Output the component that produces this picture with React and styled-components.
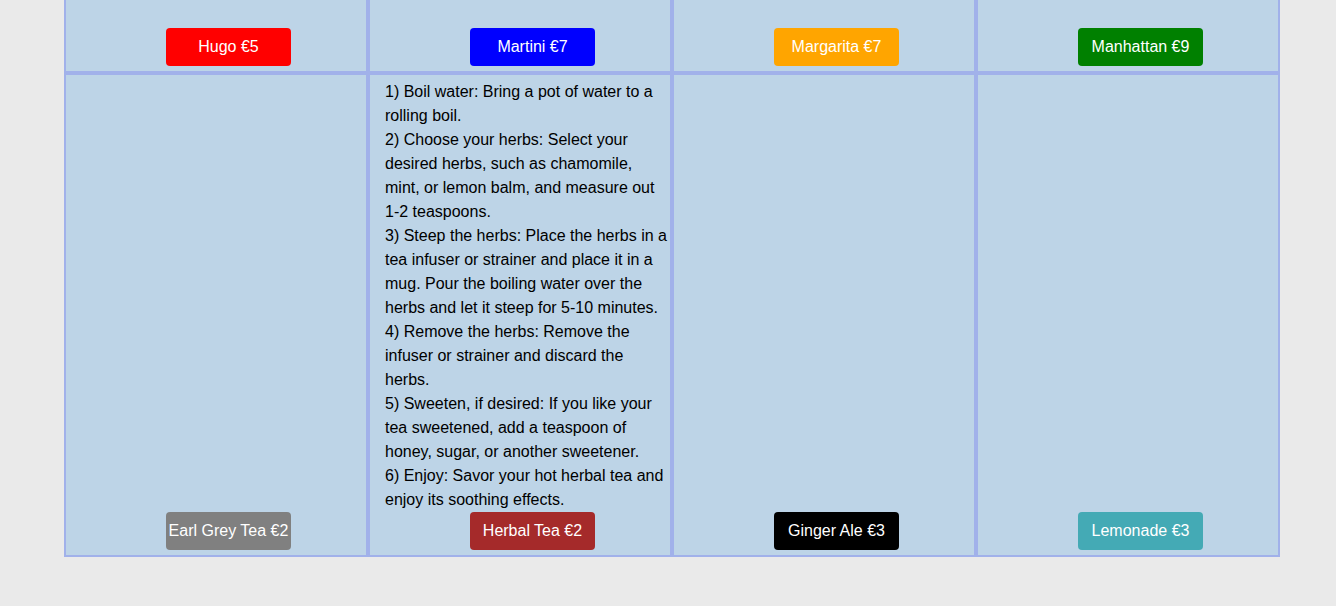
import React from "react";
import styled, { createGlobalStyle } from "styled-components";

const GlobalStyle = createGlobalStyle`
  html, body {
    margin: 0;
    padding: 0;
    background: #eaeaea;
    font-family: "Liberation Sans", Arial, sans-serif;
  }
  * { box-sizing: border-box; }
`;

const Page = styled.div`
  width: 1336px;
  height: 606px;
  background: #eaeaea;
  padding-left: 64px;
`;

const Menu = styled.div`
  display: grid;
  grid-template-columns: repeat(4, 304px);
  width: 1216px;
`;

const Cell = styled.div`
  display: flex;
  flex-direction: column;
  justify-content: flex-end;
  align-items: flex-start;
  background: #bdd4e7;
  border: 2px solid #a1b1ea;
  border-top: ${(p) => (p.$clipped ? "none" : "2px solid #a1b1ea")};
  padding: ${(p) => (p.$clipped ? "28px 0 5px 15px" : "5px 0 5px 15px")};
  min-height: ${(p) => (p.$clipped ? "73px" : "484px")};
`;

const Recipe = styled.p`
  margin: 0;
  width: 285px;
  font-size: 16px;
  line-height: 24px;
  color: #000;
  white-space: pre-line;
`;

const DrinkButton = styled.button`
  margin-left: 85px;
  width: 125px;
  height: 38px;
  padding: 0;
  border: none;
  border-radius: 4px;
  background: ${(p) => p.$color};
  color: #fff;
  font-family: "Liberation Sans", Arial, sans-serif;
  font-size: 16px;
  white-space: nowrap;
  overflow: visible;
  display: flex;
  align-items: center;
  justify-content: center;
  cursor: pointer;
`;

const topRow = [
  { name: "Hugo €5", color: "#ff0000" },
  { name: "Martini €7", color: "#0000ff" },
  { name: "Margarita €7", color: "#ffa500" },
  { name: "Manhattan €9", color: "#008000" },
];

const herbal = `1) Boil water: Bring a pot of water to a rolling boil.
2) Choose your herbs: Select your desired herbs, such as chamomile, mint, or lemon balm, and measure out 1-2 teaspoons.
3) Steep the herbs: Place the herbs in a tea infuser or strainer and place it in a mug. Pour the boiling water over the herbs and let it steep for 5-10 minutes.
4) Remove the herbs: Remove the infuser or strainer and discard the herbs.
5) Sweeten, if desired: If you like your tea sweetened, add a teaspoon of honey, sugar, or another sweetener.
6) Enjoy: Savor your hot herbal tea and enjoy its soothing effects.`;

const bottomRow = [
  { name: "Earl Grey Tea €2", color: "#808080" },
  { name: "Herbal Tea €2", color: "#a52a2a", recipe: herbal },
  { name: "Ginger Ale €3", color: "#000000" },
  { name: "Lemonade €3", color: "#44aab5" },
];

export default function App() {
  return (
    <>
      <GlobalStyle />
      <Page>
        <Menu>
          {topRow.map((d) => (
            <Cell key={d.name} $clipped>
              <DrinkButton $color={d.color}>{d.name}</DrinkButton>
            </Cell>
          ))}
          {bottomRow.map((d) => (
            <Cell key={d.name}>
              {d.recipe && <Recipe>{d.recipe}</Recipe>}
              <DrinkButton $color={d.color}>{d.name}</DrinkButton>
            </Cell>
          ))}
        </Menu>
      </Page>
    </>
  );
}
